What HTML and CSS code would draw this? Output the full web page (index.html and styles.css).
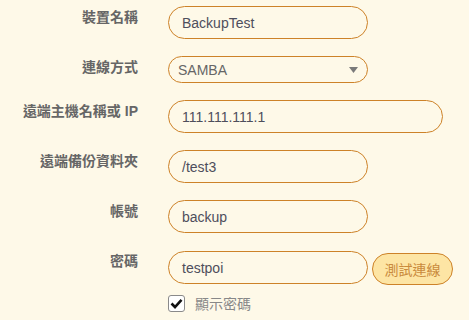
FILE: index.html
```html
<!DOCTYPE html>
<html lang="zh-Hant">
<head>
<meta charset="utf-8">
<link rel="stylesheet" href="styles.css">
</head>
<body>
<form class="form">
  <label class="lbl">裝置名稱</label>
  <div class="ctl"><div class="field w200">BackupTest</div></div>

  <label class="lbl">連線方式</label>
  <div class="ctl"><div class="select w200"><span>SAMBA</span><svg class="arrow" width="9" height="6" viewBox="0 0 9 6"><path d="M0 0H9L4.5 6Z" fill="#7a7a7a"/></svg></div></div>

  <label class="lbl">遠端主機名稱或 IP</label>
  <div class="ctl"><div class="field w275">111.111.111.1</div></div>

  <label class="lbl">遠端備份資料夾</label>
  <div class="ctl"><div class="field w200">/test3</div></div>

  <label class="lbl">帳號</label>
  <div class="ctl"><div class="field w200">backup</div></div>

  <label class="lbl">密碼</label>
  <div class="ctl">
    <div class="pwrow">
      <div class="field w200">testpoi</div>
      <button type="button" class="btn">測試連線</button>
    </div>
    <div class="check">
      <span class="box"><svg width="13" height="11" viewBox="0 0 13 11"><path d="M1.5 5.5L5 9L11.5 1.8" fill="none" stroke="#111" stroke-width="2.6"/></svg></span>
      <span class="check-text">顯示密碼</span>
    </div>
  </div>
</form>
</body>
</html>
```
FILE: styles.css
```css
html, body {
  margin: 0;
  padding: 0;
  background: #fef9e8;
}
body {
  font-family: "Liberation Sans", Arial, "Noto Sans CJK TC", sans-serif;
  font-size: 14px;
}
.form {
  display: grid;
  grid-template-columns: 138px 1fr;
  column-gap: 30px;
  row-gap: 17px;
  padding-top: 6px;
}
.lbl {
  text-align: right;
  font-weight: bold;
  color: #666;
  line-height: 20px;
  padding-top: 1px;
}
.field {
  box-sizing: border-box;
  height: 33px;
  border: 1px solid #cd8228;
  border-radius: 17px;
  padding-left: 13px;
  display: flex;
  align-items: center;
  color: #4e4e5c;
  background: #fef9e8;
}
.w200 { width: 200px; }
.w275 { width: 275px; }
.select {
  box-sizing: border-box;
  height: 27px;
  border: 1px solid #cd8228;
  border-radius: 14px;
  padding: 0 9px 0 9px;
  display: flex;
  align-items: center;
  justify-content: space-between;
  color: #666;
}
.arrow { margin-top: 1px; }
.pwrow {
  display: flex;
  align-items: center;
  gap: 4px;
}
.btn {
  box-sizing: border-box;
  width: 81px;
  height: 32px;
  margin-top: 3px;
  border: 1px solid #cd8228;
  border-radius: 16px;
  background: #fde5a4;
  color: #c98a3c;
  font-family: "Liberation Sans", "Noto Sans CJK TC", sans-serif;
  font-size: 14px;
  padding: 0;
}
.check {
  display: flex;
  align-items: center;
  margin-top: 8px;
}
.box {
  box-sizing: border-box;
  width: 17px;
  height: 17px;
  border: 1px solid #8a8a8a;
  border-radius: 3px;
  background: #fff;
  display: flex;
  align-items: center;
  justify-content: center;
}
.check-text {
  margin-left: 10px;
  color: #888;
}
```
